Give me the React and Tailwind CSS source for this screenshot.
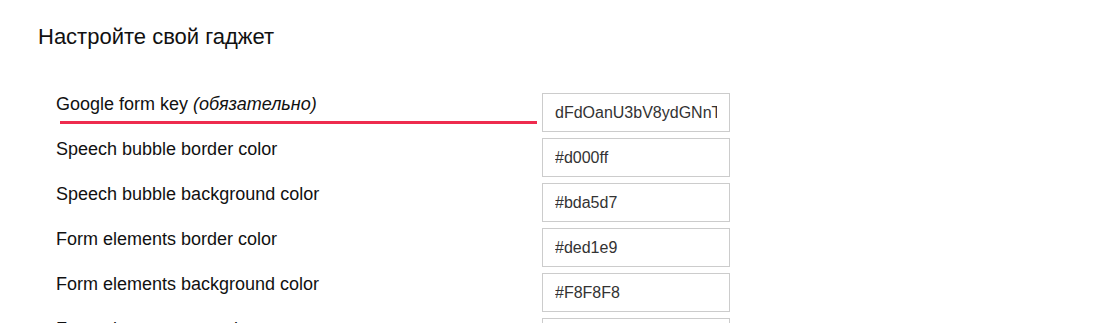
import React from "react";

const rows = [
  { label: "Speech bubble border color", value: "#d000ff" },
  { label: "Speech bubble background color", value: "#bda5d7" },
  { label: "Form elements border color", value: "#ded1e9" },
  { label: "Form elements background color", value: "#F8F8F8" },
  { label: "Form elements text color", value: "#333333" },
];

function Field({ value }) {
  return (
    <input
      readOnly
      value={value}
      className="w-[188px] h-[39px] shrink-0 border border-[#cccccc] bg-white px-[12px] text-[16px] text-[#333] outline-none"
    />
  );
}

export default function App() {
  return (
    <div className="w-full h-[323px] overflow-hidden bg-white font-['Liberation_Sans',Arial,sans-serif]">
      <h1 className="pl-[38px] pt-[24px] text-[22px] leading-[26px] text-[#111]">
        Настройте свой гаджет
      </h1>

      <div className="mt-[43px] pl-[56px] flex flex-col gap-[6px]">
        <div className="flex">
          <div className="w-[486px] flex flex-col pt-[1px]">
            <span className="text-[18px] leading-[21px] text-[#111]">
              Google form key <i>(обязательно)</i>
            </span>
            <div className="ml-[4px] mr-[5px] mt-[6px] h-[3px] bg-[#ee2b4e]" />
          </div>
          <Field value="dFdOanU3bV8ydGNnTmhYbkRQZ1E6MQ" />
        </div>

        {rows.map((r) => (
          <div key={r.label} className="flex">
            <div className="w-[486px] pt-[1px] text-[18px] leading-[21px] text-[#111]">
              {r.label}
            </div>
            <Field value={r.value} />
          </div>
        ))}
      </div>
    </div>
  );
}
